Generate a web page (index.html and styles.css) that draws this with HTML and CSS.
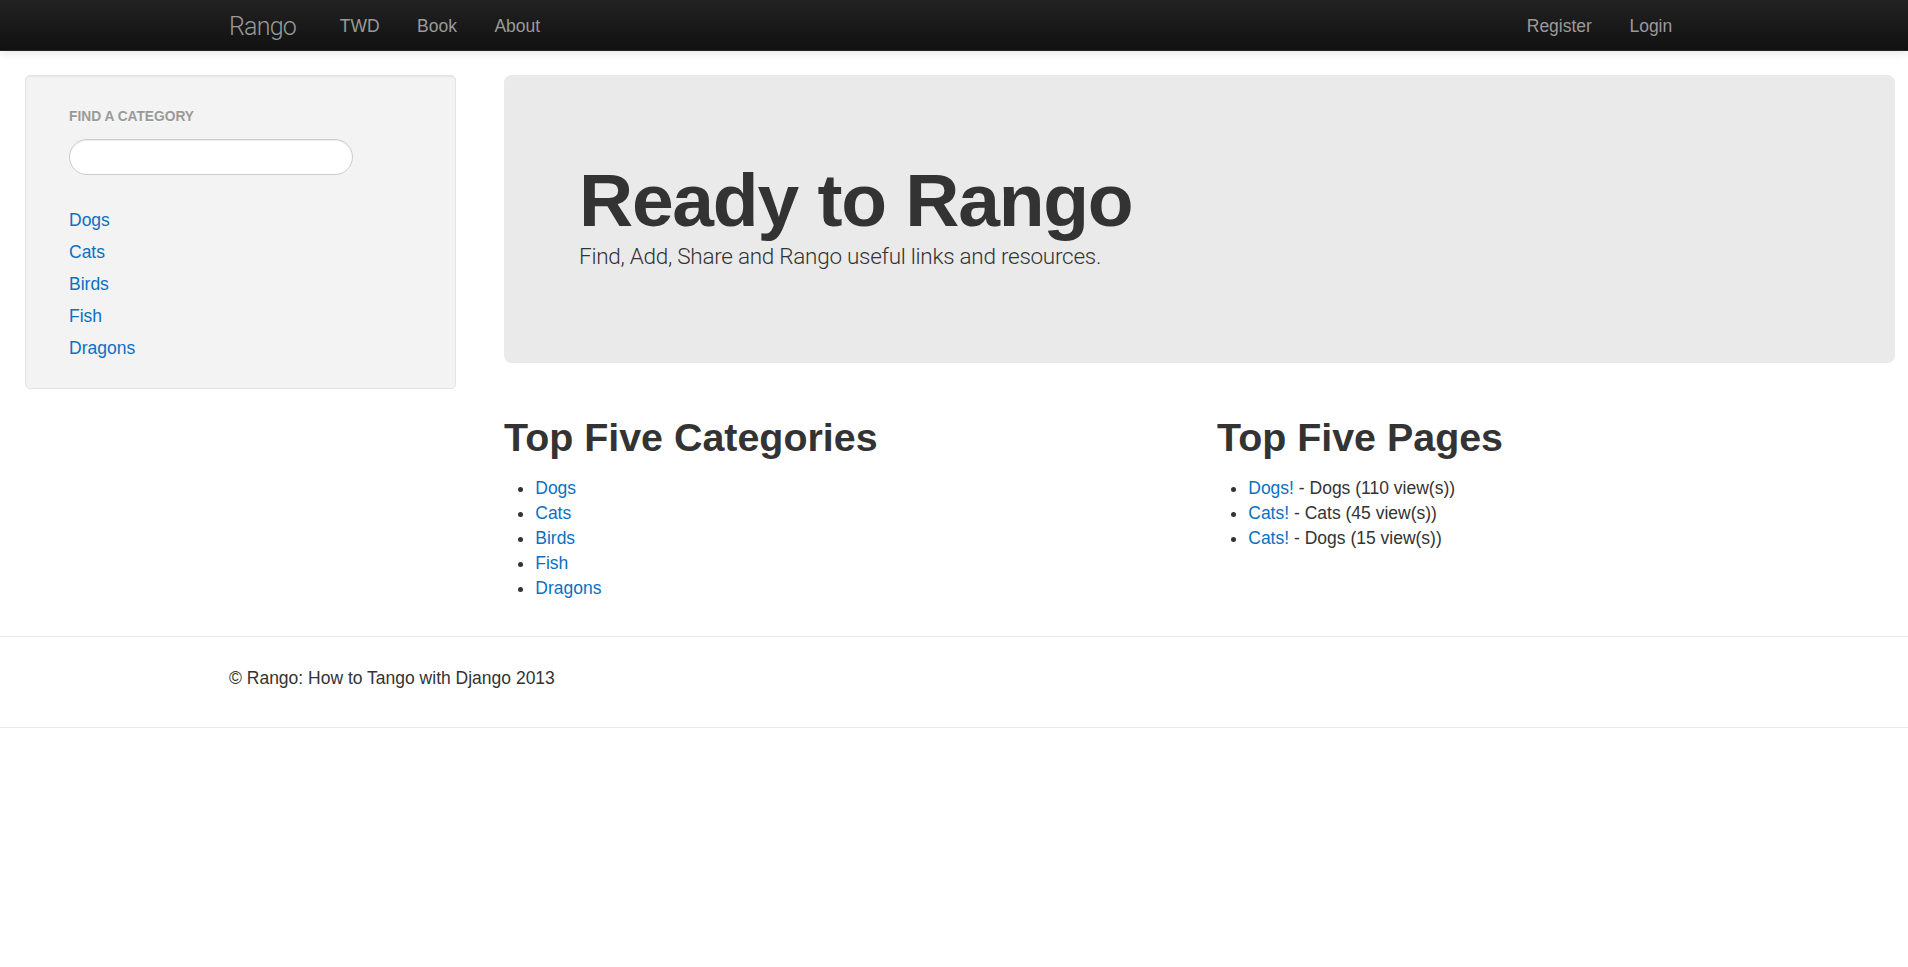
FILE: index.html
```html
<!DOCTYPE html>
<html lang="en">
<head>
<meta charset="utf-8">
<title>Rango</title>
<link rel="stylesheet" href="styles.css">
</head>
<body>
<header class="navbar">
  <div class="navbar-inner">
    <a class="brand" href="#">Rango</a>
    <ul class="nav">
      <li><a href="#">TWD</a></li>
      <li><a href="#">Book</a></li>
      <li><a href="#">About</a></li>
    </ul>
    <ul class="nav nav-right">
      <li><a href="#">Register</a></li>
      <li><a href="#">Login</a></li>
    </ul>
  </div>
</header>

<div class="container-fluid">
  <aside class="well">
    <div class="nav-header">Find a Category</div>
    <input class="search-query" type="text" name="suggestion">
    <ul class="cat-list">
      <li><a href="#">Dogs</a></li>
      <li><a href="#">Cats</a></li>
      <li><a href="#">Birds</a></li>
      <li><a href="#">Fish</a></li>
      <li><a href="#">Dragons</a></li>
    </ul>
  </aside>

  <main class="content">
    <section class="hero">
      <h1>Ready to Rango</h1>
      <p>Find, Add, Share and Rango useful links and resources.</p>
    </section>

    <div class="row">
      <div class="col">
        <h2>Top Five Categories</h2>
        <ul class="bullets">
          <li><a href="#">Dogs</a></li>
          <li><a href="#">Cats</a></li>
          <li><a href="#">Birds</a></li>
          <li><a href="#">Fish</a></li>
          <li><a href="#">Dragons</a></li>
        </ul>
      </div>
      <div class="col">
        <h2>Top Five Pages</h2>
        <ul class="bullets">
          <li><a href="#">Dogs!</a> - Dogs (110 view(s))</li>
          <li><a href="#">Cats!</a> - Cats (45 view(s))</li>
          <li><a href="#">Cats!</a> - Dogs (15 view(s))</li>
        </ul>
      </div>
    </div>
  </main>
</div>

<hr class="rule rule-top">
<footer class="footer">
  <p>&copy; Rango: How to Tango with Django 2013</p>
</footer>
<hr class="rule">
</body>
</html>
```

FILE: styles.css
```css
body {
  margin: 0;
  font-family: "Liberation Sans", Arial, sans-serif;
  font-size: 17.5px;
  line-height: 25px;
  color: #333;
  background: #fff;
}

a {
  color: #0a70c2;
  text-decoration: none;
}

/* Navbar */
.navbar {
  height: 50px;
  border-bottom: 1px solid #252525;
  background: linear-gradient(to bottom, #222 0%, #111 100%);
  box-shadow: 0 1px 10px rgba(0, 0, 0, 0.12);
}

.navbar-inner {
  display: flex;
  align-items: center;
  height: 50px;
  padding: 0 217px 0 204px;
}

.brand {
  display: block;
  padding: 13.5px 25px 11.5px;
  font-family: Roboto, "Liberation Sans", sans-serif;
  font-weight: 300;
  font-size: 25px;
  line-height: 25px;
  letter-spacing: -0.8px;
  color: #999;
}

.nav {
  display: flex;
  margin: 0;
  padding: 0;
  list-style: none;
}

.nav a {
  display: block;
  padding: 13.5px 18.75px 11.5px;
  line-height: 25px;
  color: #9a9a9a;
}

.nav-right {
  margin-left: auto;
}

/* Layout */
.container-fluid {
  display: grid;
  grid-template-columns: 431px 1391px;
  column-gap: 48px;
  align-items: start;
  padding: 24px 0 0 25px;
}

/* Sidebar */
.well {
  background: #f3f3f3;
  border: 1px solid #e3e3e3;
  border-radius: 5px;
  box-shadow: inset 0 1px 1px rgba(0, 0, 0, 0.05);
  padding: 24px 0 24px 43px;
}

.nav-header {
  padding: 4px 0;
  font-size: 13.75px;
  line-height: 25px;
  font-weight: bold;
  color: #999;
  text-transform: uppercase;
  text-shadow: 0 1px 0 rgba(255, 255, 255, 0.5);
}

.search-query {
  display: block;
  box-sizing: border-box;
  margin: 6px 0 0;
  width: 284px;
  height: 36px;
  padding: 5px 17px;
  border: 1px solid #ccc;
  border-radius: 18px;
  background: #fff;
  box-shadow: inset 0 1px 1px rgba(0, 0, 0, 0.075);
  font: inherit;
  outline: none;
}

.cat-list {
  margin: 29px 0 0;
  padding: 0;
  list-style: none;
}

.cat-list a {
  display: block;
  padding: 3.5px 0;
  line-height: 25px;
}

/* Hero */
.hero {
  background: #eaeaea;
  border-radius: 7.5px;
  padding: 75px;
  margin-bottom: 37.5px;
}

.hero h1 {
  margin: 12.5px 0 0;
  font-size: 75px;
  line-height: 75px;
  letter-spacing: -1.25px;
  font-weight: bold;
  color: #333;
}

.hero p {
  margin: 0 0 12.5px;
  font-family: Roboto, "Liberation Sans", sans-serif;
  font-weight: 300;
  font-size: 22.5px;
  line-height: 37.5px;
  letter-spacing: -0.27px;
  color: #333;
}

/* Lists */
.row {
  display: grid;
  grid-template-columns: 683px 1fr;
  column-gap: 30px;
}

.col h2 {
  margin: 11.5px 0 14px;
  font-size: 39.4px;
  line-height: 50px;
  font-weight: bold;
  color: #333;
}

.bullets {
  margin: 0 0 11px 31.25px;
  padding: 0;
  list-style: disc;
}

/* Footer */
.rule {
  height: 0;
  margin: 25px 0;
  border: 0;
  border-top: 1px solid #eaeaea;
  border-bottom: 1px solid #fff;
}

.rule-top {
  margin-top: 24px;
}

.footer {
  padding: 3px 0 11px 229px;
}

.footer p {
  margin: 0;
}
```
